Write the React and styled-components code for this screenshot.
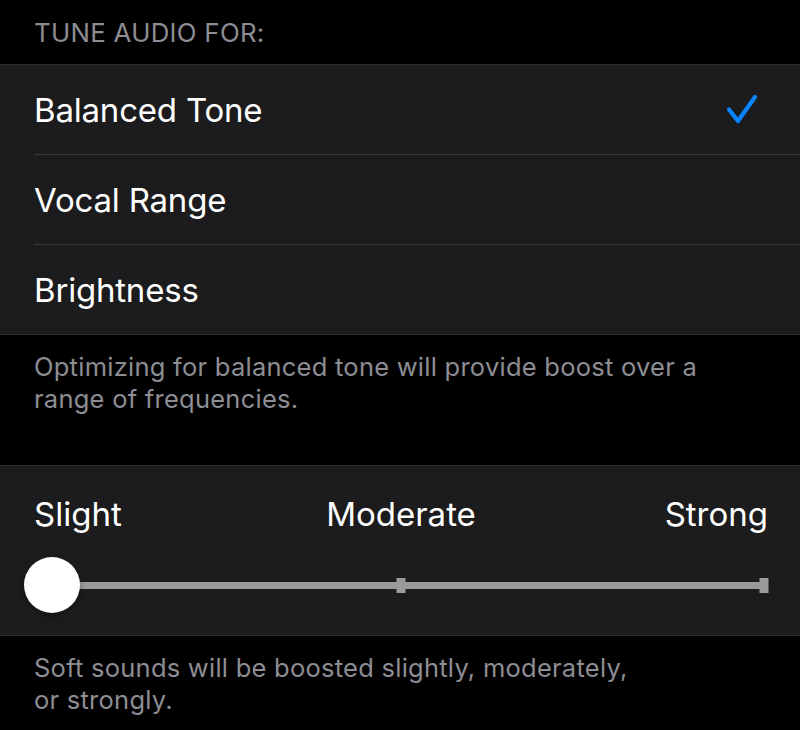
import { createGlobalStyle, styled } from "styled-components"

const GlobalStyle = createGlobalStyle`
  html, body {
    margin: 0;
    padding: 0;
    background: #000;
  }
  body {
    font-family: Inter, "Noto Sans", "Liberation Sans", sans-serif;
    -webkit-font-smoothing: antialiased;
  }
`

const Page = styled.div`
  width: 800px;
  min-height: 730px;
  background: #000;
  overflow: hidden;
`

const SectionHeader = styled.div`
  height: 64px;
  box-sizing: border-box;
  padding: 17px 34px 0;
  font-size: 25.8px;
  line-height: 32px;
  letter-spacing: 0.3px;
  color: #8d8d93;
  text-transform: uppercase;
`

const Group = styled.div`
  background: #1c1c1e;
  border-top: 1px solid #2c2c2e;
  border-bottom: 1px solid #2c2c2e;
`

const Row = styled.div`
  margin-left: 34px;
  height: 89px;
  padding-right: 42px;
  display: flex;
  align-items: center;
  justify-content: space-between;
  border-bottom: ${(p) => (p.$last ? "none" : "1px solid #38383a")};
  font-size: 33px;
  color: #fff;
  letter-spacing: -0.2px;
`

const Footer = styled.div`
  padding: 16px 34px 0;
  height: ${(p) => p.$height || "auto"};
  box-sizing: border-box;
  font-size: 25.5px;
  line-height: 32px;
  letter-spacing: 0.25px;
  color: #8d8d93;
  max-width: ${(p) => p.$width || "none"};
`

const SliderBox = styled.div`
  height: 169px;
  padding: 28px 32px 0 24px;
  box-sizing: border-box;
`

const Labels = styled.div`
  display: grid;
  grid-template-columns: 1fr auto 1fr;
  padding-left: 10px;
  font-size: 33px;
  line-height: 40px;
  color: #fff;
  letter-spacing: 0px;

  span:nth-child(2) {
    text-align: center;
  }
  span:nth-child(3) {
    text-align: right;
  }
`

const Track = styled.div`
  position: relative;
  margin-top: 23px;
  height: 56px;
  display: flex;
  align-items: center;
`

const Line = styled.div`
  flex: 1;
  margin-left: 10px;
  height: 7px;
  background: #9a9a9a;
  position: relative;
`

const Tick = styled.div`
  position: absolute;
  top: 50%;
  width: 9px;
  height: 15px;
  margin-top: -7.5px;
  background: #9a9a9a;
  left: ${(p) => p.$left};
  transform: translateX(-50%);
`

const Knob = styled.div`
  position: absolute;
  left: 0;
  top: 0;
  width: 56px;
  height: 56px;
  border-radius: 50%;
  background: #fff;
  box-shadow: 0 2px 6px rgba(0, 0, 0, 0.35);
`

const Check = () => (
  <svg width="32" height="32" viewBox="0 0 32 32" fill="none">
    <path d="M3 15.5 L12 27 L29 3" stroke="#0a84ff" strokeWidth="4.2" strokeLinecap="round" strokeLinejoin="round" />
  </svg>
)

const options = ["Balanced Tone", "Vocal Range", "Brightness"]

export default function App() {
  return (
    <Page>
      <GlobalStyle />
      <SectionHeader>Tune Audio For:</SectionHeader>
      <Group>
        {options.map((o, i) => (
          <Row key={o} $last={i === options.length - 1}>
            {o}
            {i === 0 && <Check />}
          </Row>
        ))}
      </Group>
      <Footer $height="130px" $width="740px">
        Optimizing for balanced tone will provide boost over a range of frequencies.
      </Footer>
      <Group>
        <SliderBox>
          <Labels>
            <span>Slight</span>
            <span>Moderate</span>
            <span>Strong</span>
          </Labels>
          <Track>
            <Line>
              <Tick $left="50%" />
              <Tick $left="calc(100% - 4px)" />
            </Line>
            <Knob />
          </Track>
        </SliderBox>
      </Group>
      <Footer $width="670px">
        Soft sounds will be boosted slightly, moderately, or strongly.
      </Footer>
    </Page>
  )
}
